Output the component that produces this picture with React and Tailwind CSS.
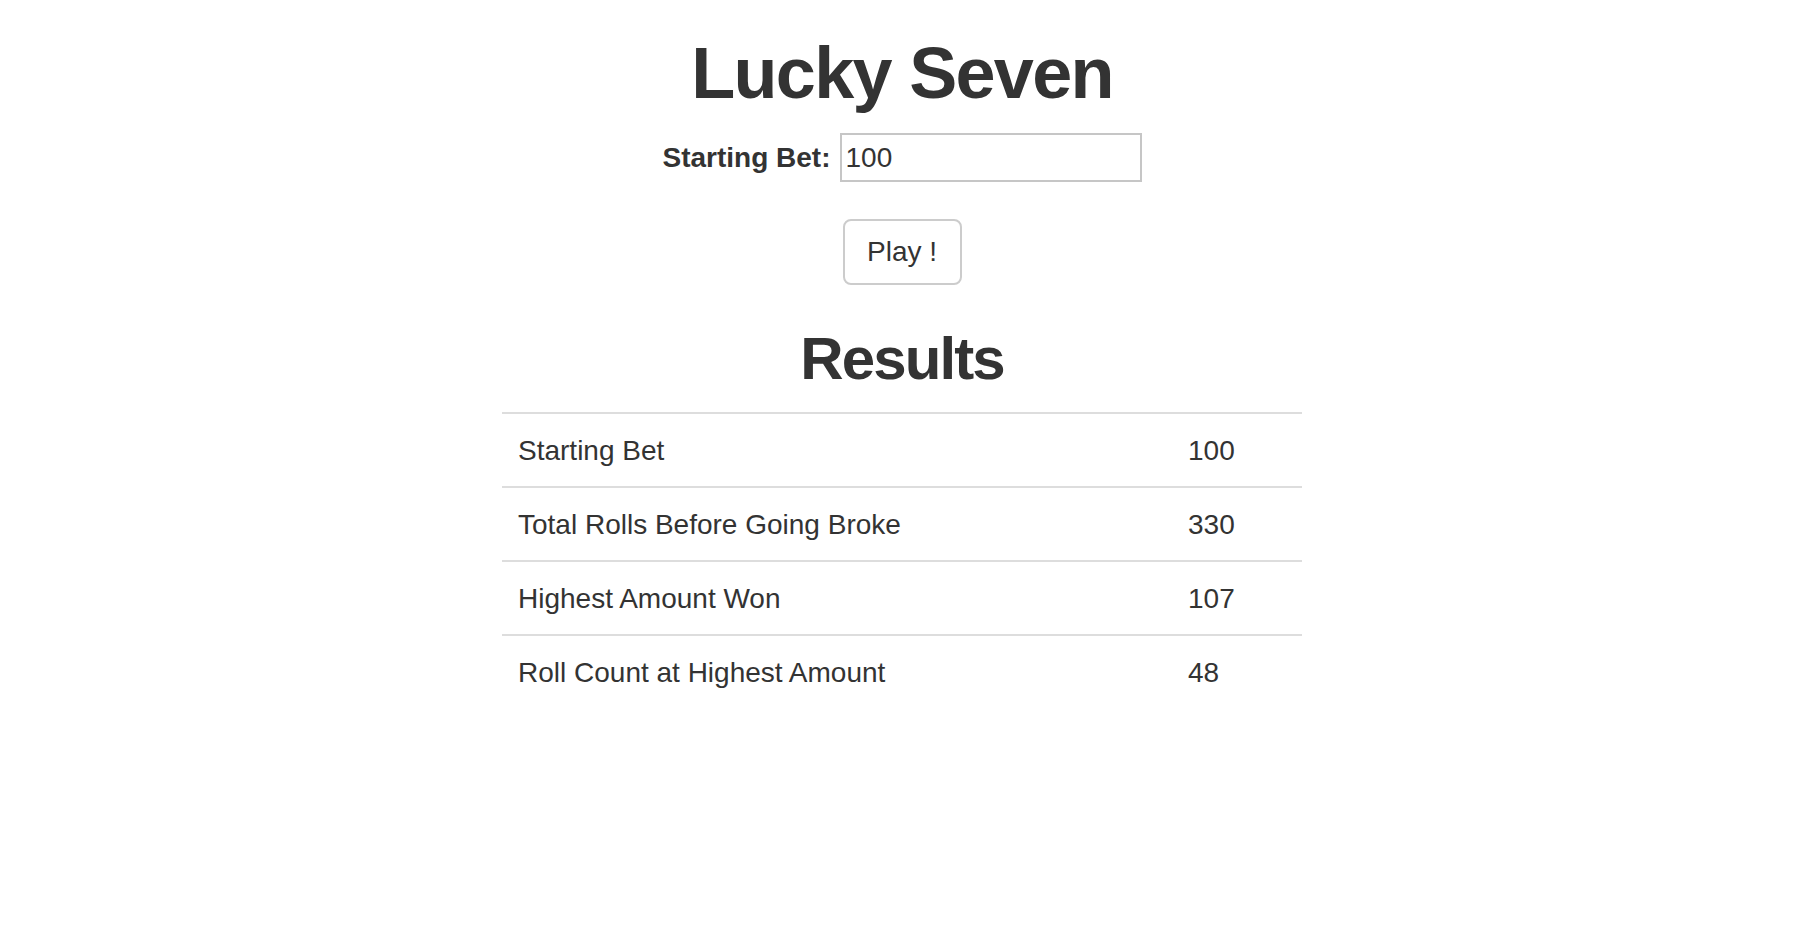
import { useState } from 'react';

const results = [
  { label: 'Starting Bet', value: '100' },
  { label: 'Total Rolls Before Going Broke', value: '330' },
  { label: 'Highest Amount Won', value: '107' },
  { label: 'Roll Count at Highest Amount', value: '48' },
];

const App = () => {
  const [bet, setBet] = useState('100');

  return (
    <div className="min-h-screen bg-white text-[#333333] font-['Liberation_Sans',Arial,sans-serif] pt-[34px]">
      <div className="flex flex-col items-center">
        {/* Title */}
        <h1 className="m-0 text-[72px] leading-[79px] font-bold tracking-[-1.7px]">
          Lucky Seven
        </h1>

        {/* Bet input */}
        <div className="mt-[20px] flex items-center gap-[9px]">
          <label className="text-[28px] leading-[40px] font-bold">Starting Bet:</label>
          <input
            type="text"
            value={bet}
            onChange={(e) => setBet(e.target.value)}
            className="w-[302px] h-[49px] border-2 border-[#c6c6c6] px-[4px] text-[28px] text-[#333333] outline-none"
          />
        </div>

        {/* Play button */}
        <button
          type="button"
          className="mt-[37px] w-[119px] h-[66px] border-2 border-[#cccccc] rounded-[8px] bg-white text-[28px] leading-[40px] text-[#333333]"
        >
          Play !
        </button>

        {/* Results */}
        <h2 className="mt-[41px] m-0 text-[60px] leading-[66px] font-bold tracking-[-1.9px]">
          Results
        </h2>

        <div className="mt-[20px] w-[800px]">
          {results.map((row) => (
            <div
              key={row.label}
              className="grid grid-cols-[670px_1fr] border-t-2 border-[#dddddd] text-[28px] leading-[40px]"
            >
              <div className="pt-[17px] pb-[15px] pl-[16px]">{row.label}</div>
              <div className="pt-[17px] pb-[15px] pl-[16px]">{row.value}</div>
            </div>
          ))}
        </div>
      </div>
    </div>
  );
};

export default App;
